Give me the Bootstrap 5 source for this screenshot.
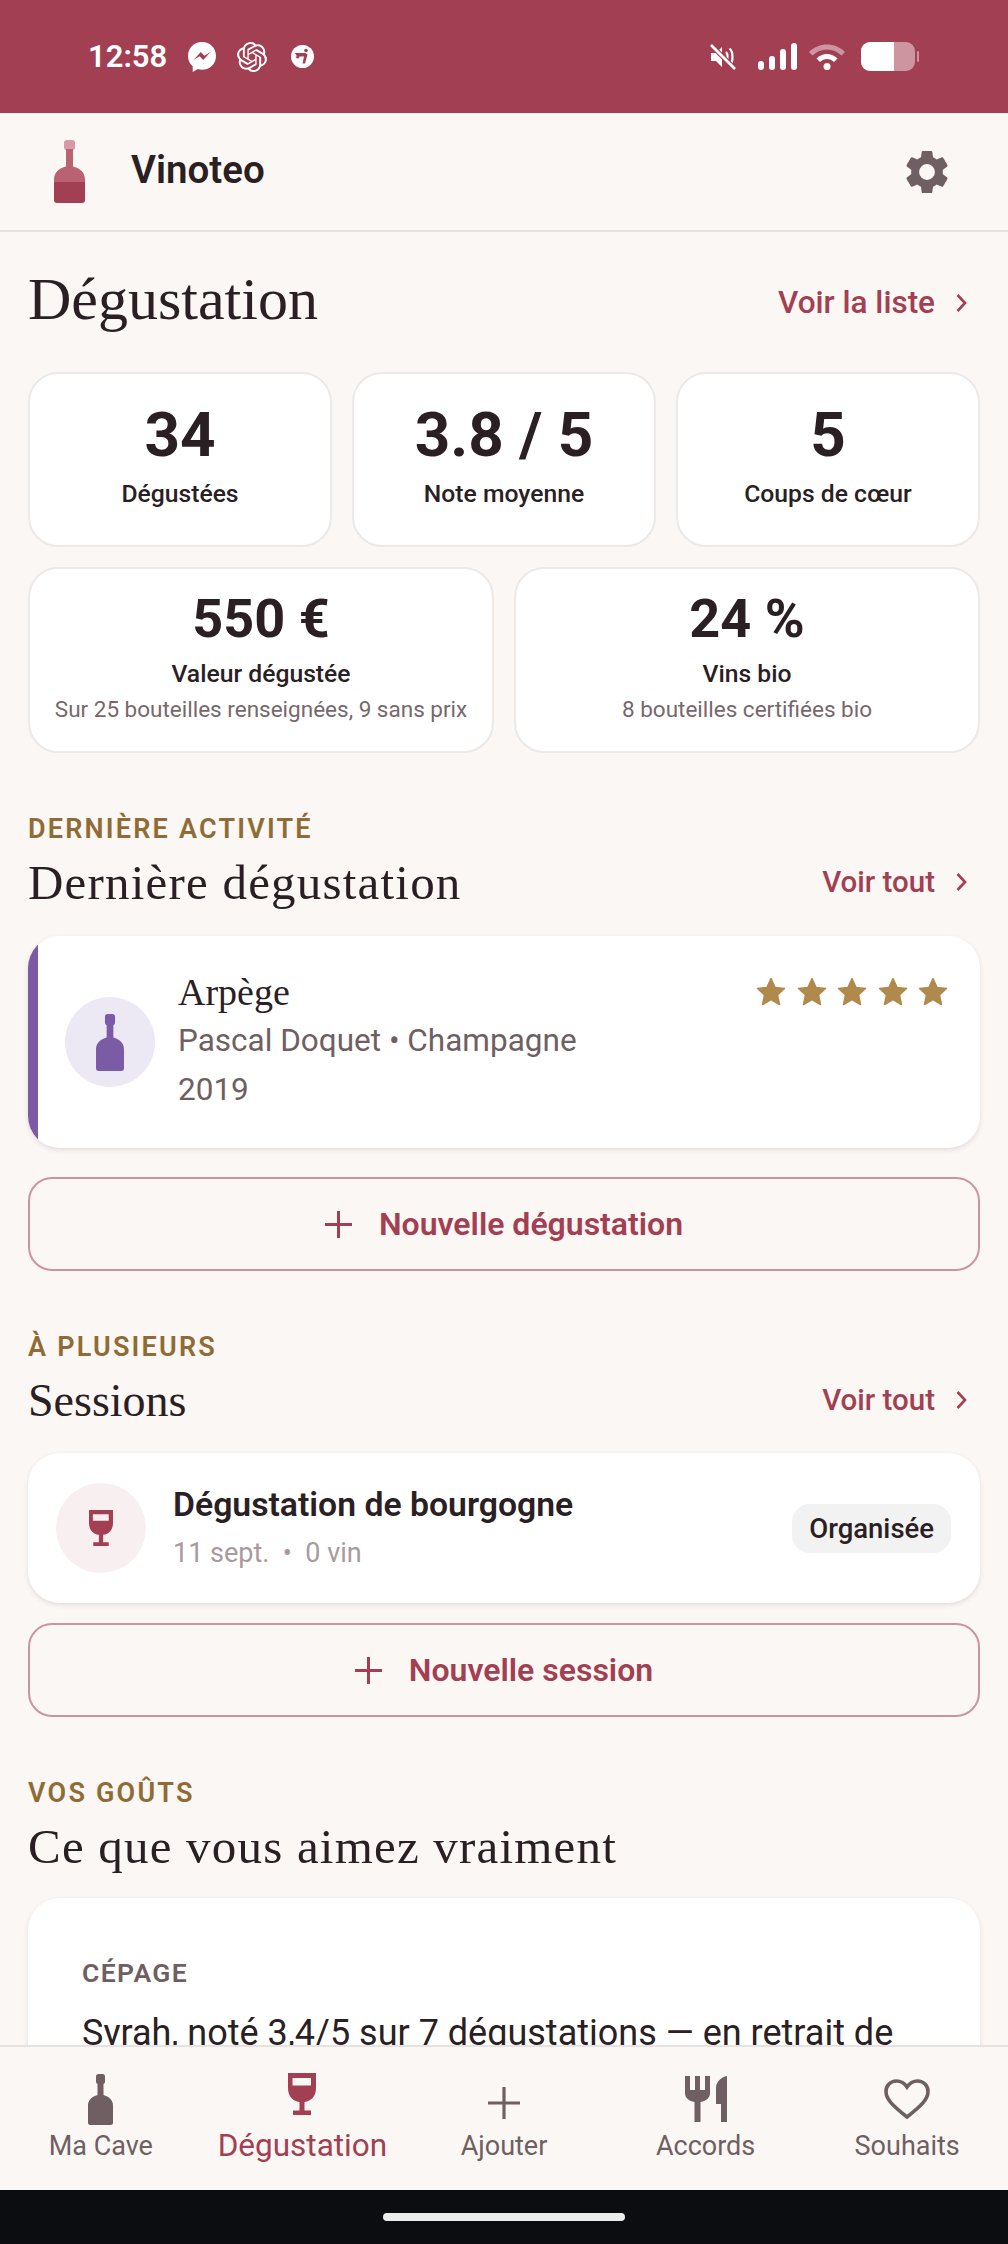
<!DOCTYPE html>
<html lang="fr">
<head>
  <meta charset="UTF-8">
  <title>Vinoteo</title>
  <link rel="stylesheet" href="https://cdn.jsdelivr.net/npm/bootstrap@5.3.0/dist/css/bootstrap.min.css">
  <style>
    html, body { height: 2244px; overflow: hidden; }
    body { background: #fbf7f4; color: #2a2024; font-family: Roboto, "Liberation Sans", sans-serif; }
    .phone { height: 2244px; }
    .status-bar { height: 113px; flex: none; background: #a23f52; color: #fff; padding: 0 89px 0 88px; }
    .status-time { font-size: 31px; font-weight: 600; line-height: 1; margin-right: 21px; }
    .status-gap { margin-right: 21px; }
    .status-gap-b { margin-right: 24px; }
    .app-header { height: 119px; flex: none; padding: 0 59px 0 54px; border-bottom: 2px solid #e6e2df; }
    .app-name { font-size: 38.5px; font-weight: 600; margin-left: 46px; margin-bottom: 3px; line-height: 1; }
    .scroll-area { flex: 1 1 0; min-height: 0; overflow: hidden; padding: 0 28px; }
    .serif { font-family: "Liberation Serif", serif; font-weight: 400; }
    .page-title { font-size: 60px; line-height: 70px; margin: 0; }
    .page-head { padding-top: 32px; height: 140px; }
    .see-link { color: #a23f52; font-size: 29.500px; font-weight: 500; text-decoration: none; padding-right: 13px; margin-top: 7px; }
    .see-link svg { margin-left: 21px; }
    .see-link-page { font-size: 31.500px; margin-top: 15px; }
    .stat-box { background: #fff; border: 2px solid #ece9e7; border-radius: 30px; text-align: center; }
    .stat-row-a { height: 175px; gap: 20px; }
    .stat-row-b { height: 186px; gap: 20px; margin-top: 20px; }
    .stat-num-lg { font-size: 62px; font-weight: 700; line-height: 70px; margin-top: 26px; }
    .stat-num-md { font-size: 54px; font-weight: 700; line-height: 60px; margin-top: 20px; }
    .stat-label { font-size: 24.700px; font-weight: 500; line-height: 32px; }
    .stat-label-a { margin-top: 8px; }
    .stat-label-b { margin-top: 9px; }
    .stat-sub { font-size: 22.500px; color: #76686c; line-height: 30px; margin-top: 4px; }
    .eyebrow { color: #8f6b35; font-size: 27px; font-weight: 600; letter-spacing: 2.200px; line-height: 30px; }
    .sec-title { font-size: 49px; letter-spacing: 1.200px; line-height: 60px; margin: 9px 0 0; }
    .sec-title-tight { font-size: 46px; letter-spacing: 0; }
    .wine-card { background: #fff; border-radius: 32px; box-shadow: 0 2px 5px rgba(60, 40, 40, .12); overflow: hidden; }
    .last-card { height: 212px; margin-top: 23px; }
    .last-stripe { width: 10px; flex: none; background: #7b5aa6; }
    .last-body { padding: 0 32px 0 27px; }
    .last-text { margin-left: 23px; }
    .round-ico { width: 90px; height: 90px; border-radius: 50%; flex: none; }
    .ico-violet { background: #ece8f4; }
    .ico-rose { background: #f7eff0; }
    .wine-name { font-size: 38px; line-height: 47px; margin-top: 33px; }
    .wine-meta { font-size: 31.500px; color: #6f5f63; line-height: 49px; }
    .wine-stars { gap: 10.500px; margin-top: 41px; }
    .add-btn { height: 94px; border: 2px solid #cd949f; border-radius: 24px; color: #a23f52; font-size: 32px; font-weight: 600; gap: 27px; background: transparent; }
    .add-btn:hover { color: #a23f52; border-color: #cd949f; }
    .add-btn-a { margin-top: 29px; }
    .add-btn-b { margin-top: 20px; }
    .sess-card { height: 150px; margin-top: 22px; padding: 0 29px 0 28px; }
    .sess-text { margin-left: 27px; }
    .sess-title { font-size: 33.750px; font-weight: 600; line-height: 40px; }
    .sess-sub { font-size: 27px; color: #a89a9e; line-height: 36px; margin-top: 10px; }
    .sess-tag { background: #f2f2f2; border-radius: 18px; font-size: 27.500px; font-weight: 500; padding: 0 17px; height: 49px; line-height: 49px; }
    .taste-card { padding: 60px 54px 0; margin-top: 21px; height: 400px; }
    .taste-kicker { font-size: 26.500px; font-weight: 600; letter-spacing: 1.400px; color: #6f5f63; line-height: 30px; }
    .taste-text { font-size: 36px; line-height: 48px; margin-top: 21px; white-space: nowrap; }
    .bottom-nav { height: 145px; flex: none; background: #fbf7f4; border-top: 2px solid #e6e2df; }
    .nav-cell { flex: 1 1 0; color: #6f5f63; font-size: 27px; line-height: 34px; text-decoration: none; }
    .nav-ico { height: 52px; margin-top: 26px; margin-bottom: 4px; }
    .nav-on { color: #a23f52; font-size: 31.500px; }
    .gesture-bar { height: 54px; flex: none; background: #0c0d11; }
    .gesture-pill { width: 242px; height: 8px; border-radius: 4px; background: #eceded; }
    .sec-gap { margin-top: 61px; }
  </style>
</head>
<body>
<svg width="0" height="0" class="d-block">
  <defs>
    <symbol id="bottle" viewBox="0 0 25 51">
      <rect x="8" y="0" width="9" height="10" rx="2.500"/>
      <path d="M9.500 8h6v13c5.500 1.500 9.500 5 9.500 10.500v17a2.500 2.500 0 0 1-2.500 2.500h-20A2.500 2.500 0 0 1 0 48.500v-17C0 26 4 22.500 9.500 21z"/>
    </symbol>
    <symbol id="glass" viewBox="0 0 28 42">
      <path fill-rule="evenodd" d="M0 0h28v15c0 8-4.500 13-11.500 14v8.500H23V42H5v-4.500h6.500V29C4.500 28 0 23 0 15zM4.500 5v7.500h18.500V5z"/>
    </symbol>
    <symbol id="star" viewBox="0 0 30 30">
      <path stroke-linejoin="round" stroke-width="1.500" d="M15 1.500l4.100 9 9.400 1-7 6.500 2 9.500-8.500-5-8.500 5 2-9.500-7-6.500 9.400-1z"/>
    </symbol>
  </defs>
</svg>

<div class="phone d-flex flex-column">
  <div class="status-bar d-flex align-items-center">
    <span class="status-time">12:58</span>
    <svg width="28" height="30" viewBox="0 0 28 30" class="status-gap"><path fill="#fff" d="M14 0C6 0 0 6 0 14c0 4.300 1.700 7.800 4.700 10.200V30l5.300-2.900c1.300.4 2.600.6 4 .6 8 0 14-5.800 14-13.700S22 0 14 0z"/><path fill="#a23f52" d="M5.500 18l7.300-8 3.700 3.800 6-3.800-7.300 8-3.600-3.800z"/></svg>
    <svg width="30" height="30" viewBox="0 0 24 24" class="status-gap-b" fill="#fff"><path d="M22.2819 9.8211a5.9847 5.9847 0 0 0-.5157-4.9108 6.0462 6.0462 0 0 0-6.5098-2.9A6.0651 6.0651 0 0 0 4.9807 4.1818a5.9847 5.9847 0 0 0-3.9977 2.9 6.0462 6.0462 0 0 0 .7427 7.0966 5.98 5.98 0 0 0 .511 4.9107 6.051 6.051 0 0 0 6.5146 2.9001A5.9847 5.9847 0 0 0 13.2599 24a6.0557 6.0557 0 0 0 5.7718-4.2058 5.9894 5.9894 0 0 0 3.9977-2.9001 6.0557 6.0557 0 0 0-.7475-7.0729zm-9.022 12.6081a4.4755 4.4755 0 0 1-2.8764-1.0408l.1419-.0804 4.7783-2.7582a.7948.7948 0 0 0 .3927-.6813v-6.7369l2.02 1.1686a.071.071 0 0 1 .038.052v5.5826a4.504 4.504 0 0 1-4.4945 4.4944zm-9.6607-4.1254a4.4708 4.4708 0 0 1-.5346-3.0137l.142.0852 4.783 2.7582a.7712.7712 0 0 0 .7806 0l5.8428-3.3685v2.3324a.0804.0804 0 0 1-.0332.0615L9.74 19.9502a4.4992 4.4992 0 0 1-6.1408-1.6464zM2.3408 7.8956a4.485 4.485 0 0 1 2.3655-1.9728V11.6a.7664.7664 0 0 0 .3879.6765l5.8144 3.3543-2.0201 1.1685a.0757.0757 0 0 1-.071 0l-4.8303-2.7865A4.504 4.504 0 0 1 2.3408 7.872zm16.5963 3.8558L13.1038 8.364 15.1192 7.2a.0757.0757 0 0 1 .071 0l4.8303 2.7913a4.4944 4.4944 0 0 1-.6765 8.1042v-5.6772a.79.79 0 0 0-.407-.667zm2.0107-3.0231l-.142-.0852-4.7735-2.7818a.7759.7759 0 0 0-.7854 0L9.409 9.2297V6.8974a.0662.0662 0 0 1 .0284-.0615l4.8303-2.7866a4.4992 4.4992 0 0 1 6.6802 4.66zM8.3065 12.863l-2.02-1.1638a.0804.0804 0 0 1-.038-.0567V6.0742a4.4992 4.4992 0 0 1 7.3757-3.4537l-.142.0805L8.704 5.459a.7948.7948 0 0 0-.3927.6813zm1.0976-2.3654l2.602-1.4998 2.6069 1.4998v2.9994l-2.5974 1.4997-2.6067-1.4997Z"/></svg>
    <svg width="23" height="23" viewBox="0 0 23 23"><circle cx="11.500" cy="11.500" r="11.500" fill="#fff"/><circle cx="15" cy="5.500" r="1.800" fill="#a23f52"/><path fill="#a23f52" d="M4 8h10.500l2 1.500-2.500 9h-2.500l1.500-7H6zM4.500 11.500h4l-.5 1.800H5.500z"/></svg>
    <div class="ms-auto d-flex align-items-center">
      <svg width="28" height="28" viewBox="0 0 28 28" class="status-gap"><path fill="#fff" d="M2 10h5l6-6v20l-6-6H2z"/><path fill="none" stroke="#fff" stroke-width="2.200" d="M17 9c2 1.800 2 8.200 0 10M20.500 5.500c4 3.500 4 13.500 0 17"/><path stroke="#a23f52" stroke-width="5" d="M1 1l26 26"/><path stroke="#fff" stroke-width="2.600" d="M2 2l24 24"/></svg>
      <svg width="39" height="27" viewBox="0 0 39 27" class="me-2" fill="#fff"><rect y="18" width="6" height="9" rx="3"/><rect x="11" y="13" width="6" height="14" rx="3"/><rect x="22" y="6" width="6" height="21" rx="3"/><rect x="33" y="0" width="6" height="27" rx="3"/></svg>
      <svg width="36" height="27" viewBox="0 0 36 27" class="ms-1 me-3"><path fill="#fff" fill-opacity=".45" d="M0 9C9.500-1 26.500-1 36 9l-3.500 3.500C24.500 4.500 11.500 4.500 3.500 12.500z"/><path fill="#fff" d="M7.500 15.500c6-6 15-6 21 0L25 19c-4-4-10-4-14 0z"/><circle cx="18" cy="23.500" r="3.500" fill="#fff"/></svg>
      <svg width="58" height="29" viewBox="0 0 58 29"><rect width="54" height="29" rx="9" fill="#fff" fill-opacity=".45"/><path fill="#fff" d="M9 0h24v29H9a9 9 0 0 1-9-9V9a9 9 0 0 1 9-9z"/><rect x="56" y="9" width="2" height="11" rx="1" fill="#fff" fill-opacity=".45"/></svg>
    </div>
  </div>

  <header class="app-header d-flex align-items-center">
    <svg width="31" height="63" viewBox="0 0 31 63">
      <rect x="10" y="0" width="11" height="10" rx="2.500" fill="#d89aa6"/>
      <path fill="#b96272" d="M12 9h7v17.500c7 1.500 12 6 12 13V45H0v-5.500c0-7 5-11.500 12-13z"/>
      <path fill="#a23f52" d="M0 42h31v18a3 3 0 0 1-3 3H3a3 3 0 0 1-3-3z"/>
    </svg>
    <span class="app-name">Vinoteo</span>
    <svg width="44" height="44" viewBox="2 2 20 20" class="ms-auto" fill="#6f5f63"><path d="M19.140 12.940c.04-.3.060-.61.060-.94 0-.32-.02-.64-.07-.94l2.030-1.580a.49.49 0 0 0 .12-.61l-1.920-3.320a.488.488 0 0 0-.59-.22l-2.390.96c-.5-.38-1.030-.7-1.620-.94l-.36-2.540a.484.484 0 0 0-.48-.41h-3.840c-.24 0-.43.170-.47.410l-.36 2.540c-.59.240-1.130.570-1.620.94l-2.390-.96c-.22-.08-.47 0-.59.220L2.740 8.870c-.12.210-.08.470.12.610l2.030 1.580c-.05.3-.09.630-.09.940s.02.640.07.940l-2.030 1.580a.49.49 0 0 0-.12.610l1.920 3.320c.12.220.37.290.59.220l2.390-.96c.5.380 1.030.7 1.620.94l.36 2.540c.05.240.24.410.48.410h3.840c.24 0 .44-.17.470-.41l.36-2.540c.59-.24 1.130-.56 1.620-.94l2.390.96c.22.080.47 0 .59-.22l1.920-3.320c.12-.22.070-.47-.12-.61zM12 15.600A3.600 3.600 0 1 1 12 8.400a3.600 3.600 0 0 1 0 7.200z"/></svg>
  </header>

  <main class="scroll-area">
    <div class="page-head d-flex justify-content-between align-items-start">
      <h1 class="page-title serif">Dégustation</h1>
      <a href="#" class="see-link see-link-page d-flex align-items-center">Voir la liste
        <svg width="11" height="18" viewBox="0 0 11 18" fill="none" stroke="#a23f52" stroke-width="2.600"><path d="M1.500 1l7.500 8-7.500 8"/></svg></a>
    </div>

    <div class="stat-row-a d-flex">
      <div class="stat-box flex-fill w-100"><div class="stat-num-lg">34</div><div class="stat-label stat-label-a">Dégustées</div></div>
      <div class="stat-box flex-fill w-100"><div class="stat-num-lg">3.8 / 5</div><div class="stat-label stat-label-a">Note moyenne</div></div>
      <div class="stat-box flex-fill w-100"><div class="stat-num-lg">5</div><div class="stat-label stat-label-a">Coups de cœur</div></div>
    </div>
    <div class="stat-row-b d-flex">
      <div class="stat-box flex-fill w-100"><div class="stat-num-md">550 €</div><div class="stat-label stat-label-b">Valeur dégustée</div><div class="stat-sub">Sur 25 bouteilles renseignées, 9 sans prix</div></div>
      <div class="stat-box flex-fill w-100"><div class="stat-num-md">24 %</div><div class="stat-label stat-label-b">Vins bio</div><div class="stat-sub">8 bouteilles certifiées bio</div></div>
    </div>

    <div class="sec-gap">
      <div class="eyebrow">DERNIÈRE ACTIVITÉ</div>
      <div class="d-flex justify-content-between align-items-center">
        <h2 class="sec-title serif">Dernière dégustation</h2>
        <a href="#" class="see-link d-flex align-items-center">Voir tout
          <svg width="11" height="18" viewBox="0 0 11 18" fill="none" stroke="#a23f52" stroke-width="2.600"><path d="M1.500 1l7.500 8-7.500 8"/></svg></a>
      </div>
    </div>
    <div class="wine-card last-card d-flex">
      <div class="last-stripe"></div>
      <div class="last-body d-flex flex-grow-1">
        <div class="round-ico ico-violet d-flex align-items-center justify-content-center align-self-center">
          <svg width="28" height="57" fill="#7b5aa6"><use href="#bottle"/></svg>
        </div>
        <div class="last-text flex-grow-1">
          <div class="wine-name serif">Arpège</div>
          <div class="wine-meta">Pascal Doquet • Champagne</div>
          <div class="wine-meta">2019</div>
        </div>
        <div class="wine-stars d-flex align-items-start">
          <svg width="30" height="30" fill="#b0894d" stroke="#b0894d"><use href="#star"/></svg>
          <svg width="30" height="30" fill="#b0894d" stroke="#b0894d"><use href="#star"/></svg>
          <svg width="30" height="30" fill="#b0894d" stroke="#b0894d"><use href="#star"/></svg>
          <svg width="30" height="30" fill="#b0894d" stroke="#b0894d"><use href="#star"/></svg>
          <svg width="30" height="30" fill="#b0894d" stroke="#b0894d"><use href="#star"/></svg>
        </div>
      </div>
    </div>
    <button class="btn add-btn add-btn-a w-100 d-flex align-items-center justify-content-center p-0" type="button">
      <svg width="27" height="27" viewBox="0 0 27 27" stroke="#a23f52" stroke-width="3"><path d="M13.500 0v27M0 13.500h27"/></svg>
      Nouvelle dégustation
    </button>

    <div class="sec-gap">
      <div class="eyebrow">À PLUSIEURS</div>
      <div class="d-flex justify-content-between align-items-center">
        <h2 class="sec-title sec-title-tight serif">Sessions</h2>
        <a href="#" class="see-link d-flex align-items-center">Voir tout
          <svg width="11" height="18" viewBox="0 0 11 18" fill="none" stroke="#a23f52" stroke-width="2.600"><path d="M1.500 1l7.500 8-7.500 8"/></svg></a>
      </div>
    </div>
    <div class="wine-card sess-card d-flex align-items-center">
      <div class="round-ico ico-rose d-flex align-items-center justify-content-center">
        <svg width="24" height="36" fill="#a23f52"><use href="#glass"/></svg>
      </div>
      <div class="sess-text flex-grow-1">
        <div class="sess-title">Dégustation de bourgogne</div>
        <div class="sess-sub">11 sept. &nbsp;•&nbsp; 0 vin</div>
      </div>
      <span class="sess-tag">Organisée</span>
    </div>
    <button class="btn add-btn add-btn-b w-100 d-flex align-items-center justify-content-center p-0" type="button">
      <svg width="27" height="27" viewBox="0 0 27 27" stroke="#a23f52" stroke-width="3"><path d="M13.500 0v27M0 13.500h27"/></svg>
      Nouvelle session
    </button>

    <div class="sec-gap">
      <div class="eyebrow">VOS GOÛTS</div>
      <h2 class="sec-title serif">Ce que vous aimez vraiment</h2>
    </div>
    <div class="wine-card taste-card">
      <div class="taste-kicker">CÉPAGE</div>
      <div class="taste-text">Syrah, noté 3,4/5 sur 7 dégustations — en retrait de</div>
    </div>
  </main>

  <nav class="bottom-nav d-flex">
    <a href="#" class="nav-cell d-flex flex-column align-items-center">
      <div class="nav-ico d-flex align-items-center"><svg width="25" height="51" fill="#6f5f63"><use href="#bottle"/></svg></div>Ma Cave</a>
    <a href="#" class="nav-cell nav-on d-flex flex-column align-items-center">
      <div class="nav-ico d-flex align-items-start"><svg width="28" height="42" fill="#a23f52"><use href="#glass"/></svg></div>Dégustation</a>
    <a href="#" class="nav-cell d-flex flex-column align-items-center">
      <div class="nav-ico d-flex align-items-center"><svg width="32" height="32" viewBox="0 0 32 32" stroke="#6f5f63" stroke-width="3.200" class="mt-2"><path d="M16 0v32M0 16h32"/></svg></div>Ajouter</a>
    <a href="#" class="nav-cell d-flex flex-column align-items-center">
      <div class="nav-ico d-flex align-items-center"><svg width="42" height="46" viewBox="0 0 42 46" fill="#6f5f63"><path d="M0 0h5v14h5V0h5v14h5V0h5v17c0 5-4 8-9.500 9v20h-6V26C4 25 0 22 0 17z"/><path d="M42 0v46h-6V28h-5V12C31 6 36 1 42 0z"/></svg></div>Accords</a>
    <a href="#" class="nav-cell d-flex flex-column align-items-center">
      <div class="nav-ico d-flex align-items-center"><svg width="46" height="41" viewBox="0 0 46 41" fill="none" stroke="#6f5f63" stroke-width="3.600"><path d="M23 38C8 26 2 20 2 12.500 2 6.500 6.500 2 12.500 2c4.200 0 8 2.200 10.500 6 2.500-3.800 6.300-6 10.500-6C39.500 2 44 6.500 44 12.500 44 20 38 26 23 38z"/></svg></div>Souhaits</a>
  </nav>
  <div class="gesture-bar d-flex align-items-center justify-content-center">
    <div class="gesture-pill"></div>
  </div>
</div>
<script src="https://cdn.jsdelivr.net/npm/bootstrap@5.3.0/dist/js/bootstrap.bundle.min.js"></script>
</body>
</html>
